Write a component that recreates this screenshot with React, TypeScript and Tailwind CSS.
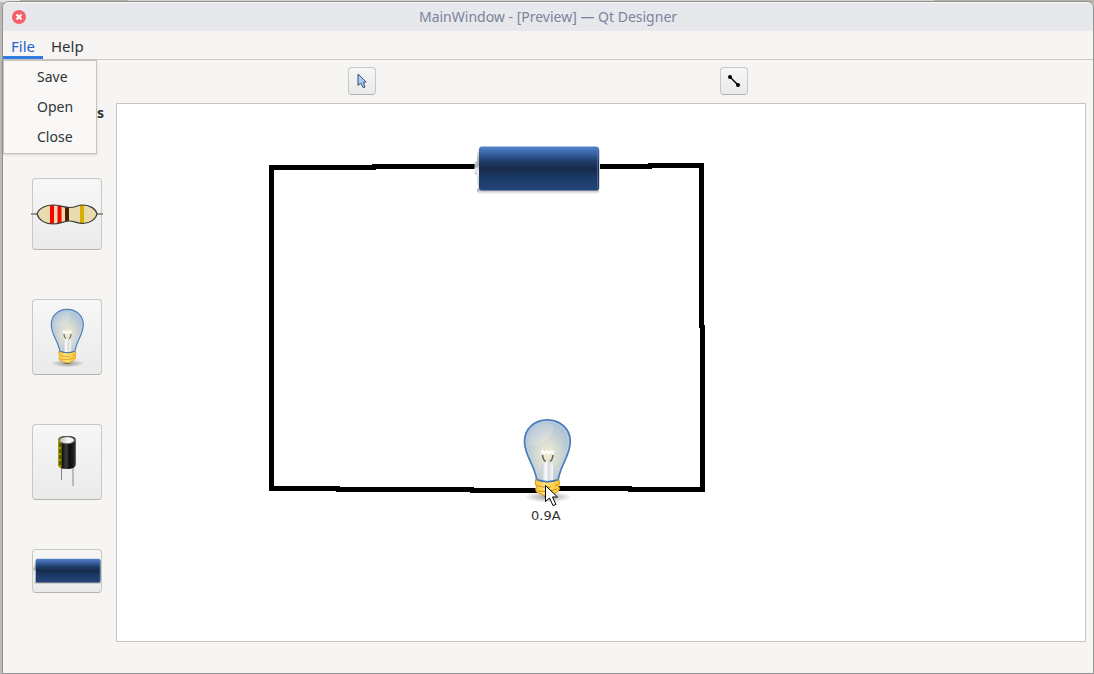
import type { ReactNode, SVGProps } from "react";

function Bulb(props: SVGProps<SVGSVGElement>) {
  return (
    <svg viewBox="0 0 60 90" aria-hidden="true" {...props}>
      <defs>
        <radialGradient id="glass" cx="0.5" cy="0.55" r="0.55">
          <stop offset="0" stopColor="#f3efd6" />
          <stop offset="0.45" stopColor="#d5dad3" />
          <stop offset="1" stopColor="#a9bfd6" />
        </radialGradient>
        <linearGradient id="brass" x1="0" x2="1">
          <stop offset="0" stopColor="#f9c436" />
          <stop offset="0.4" stopColor="#ffe277" />
          <stop offset="1" stopColor="#fbc62f" />
        </linearGradient>
        <linearGradient id="stem" x1="0" x2="1">
          <stop offset="0" stopColor="#c3cdd3" />
          <stop offset="0.35" stopColor="#ffffff" />
          <stop offset="0.6" stopColor="#d5dbde" />
          <stop offset="1" stopColor="#f7f9fa" />
        </linearGradient>
        <radialGradient id="bulbShadow">
          <stop offset="0" stopColor="#000" stopOpacity="0.38" />
          <stop offset="1" stopColor="#000" stopOpacity="0" />
        </radialGradient>
      </defs>
      <ellipse cx="31" cy="82" rx="24" ry="5.5" fill="url(#bulbShadow)" />
      <path d="M25 79 L36 79 L32.5 83 H29 Z" fill="#3c3326" />
      <path
        d="M20 66 C18 50 7.5 41 7.5 26.5 C7.5 14 17.5 4.8 30.3 4.8 S53.3 14 53.3 26.5 C53.3 41 43 50 41 66 Q30.500 70 20 66Z"
        fill="url(#glass)"
        stroke="#4a7ebb"
        strokeWidth="1.700"
      />
      <path
        d="M21.700 64 C20 49 9.500 41 9.500 26.500 C9.500 15 18.600 6.800 30.300 6.800 S51.300 15 51.300 26.500 C51.300 41 41 49 39.300 64"
        fill="none"
        stroke="#c3d6ea"
        strokeOpacity="0.75"
        strokeWidth="1"
      />
      <path d="M11 27 C10 13 24 6 36 9.500 C37 20 28 31 12.500 31Z" fill="#fff" fillOpacity="0.16" />
      <path d="M25 65 V51 Q25 47 28 47 H33 Q36 47 36 51 V65 Q30 67.500 25 65Z" fill="url(#stem)" />
      <path d="M25.500 40 Q26 45 28.500 46.500 M36 40 Q35.500 45 33 46.500" fill="none" stroke="#6e6251" strokeWidth="1.600" />
      <path d="M24.500 38 L25.500 35.500 L27.500 38.500 L29.500 36 L31.500 38.500 L33.500 36 L35.500 38.500 L36.500 35.500" fill="none" stroke="#fff" strokeWidth="1.600" />
      <path
        d="M18.500 64.500 Q30 69 42 64.500 L42.500 69 L41.500 71 L42.500 74 L41 76.500 Q38 78 35 80.500 Q31 83 27 80.500 L19.500 77 L18.500 74 L20 72 L18.300 69Z"
        fill="url(#brass)"
        stroke="#dc961c"
        strokeWidth="1"
      />
      <path d="M20 70.500 Q28 73.500 34 72 M38 71 L41 69.500 M21 76 Q31 78 40 74" fill="none" stroke="#c98a1a" strokeWidth="0.900" />
      <path d="M20 64.800 Q30.500 68.500 41 64.800" fill="none" stroke="#3f75b5" strokeWidth="1.500" />
    </svg>
  );
}

function Battery(props: SVGProps<SVGSVGElement>) {
  return (
    <svg viewBox="0 0 126 50" aria-hidden="true" {...props}>
      <defs>
        <linearGradient id="cell" x1="0" y1="0" x2="0" y2="1">
          <stop offset="0" stopColor="#5685cc" />
          <stop offset="0.12" stopColor="#4069ad" />
          <stop offset="0.32" stopColor="#20406f" />
          <stop offset="0.5" stopColor="#162a4a" />
          <stop offset="0.72" stopColor="#1b3a68" />
          <stop offset="1" stopColor="#24457a" />
        </linearGradient>
        <linearGradient id="metal" x1="0" y1="0" x2="0" y2="1">
          <stop offset="0" stopColor="#d9d9d9" />
          <stop offset="0.4" stopColor="#a9a9a9" />
          <stop offset="0.55" stopColor="#f1f1f1" />
          <stop offset="1" stopColor="#cccccc" />
        </linearGradient>
        <linearGradient id="cellShadow" x1="0" y1="0" x2="0" y2="1">
          <stop offset="0" stopColor="#000" stopOpacity="0.45" />
          <stop offset="1" stopColor="#000" stopOpacity="0" />
        </linearGradient>
      </defs>
      <rect x="3" y="43" width="122" height="6" rx="2.500" fill="url(#cellShadow)" />
      <rect x="0.500" y="16" width="6" height="14" rx="2" fill="url(#metal)" />
      <path d="M7 3 Q3 6 3 13 V35 Q3 42 7 45Z" fill="url(#metal)" />
      <rect x="119" y="3" width="7" height="42" rx="3" fill="#d7d7d7" />
      <rect x="5" y="1.500" width="120" height="44" rx="3" fill="url(#cell)" />
      <path d="M123.500 4 V43" stroke="#5b7db2" strokeOpacity="0.6" />
    </svg>
  );
}

function Resistor() {
  const body =
    "M1 0 C3 -6 10 -9 17 -9 C24 -9 28 -6.500 34 -6.500 C40 -6.500 41 -9 47 -9 C54 -9 60 -5 61 0 C60 5 54 9.500 47 9.500 C41 9.500 38 7 33 7 C28 7 24 10 17 10 C9 10 3 6 1 0Z";
  return (
    <svg className="h-6 w-[72px] shrink-0" viewBox="0 0 72 24" aria-hidden="true">
      <defs>
        <clipPath id="resistorBody">
          <path d={body} />
        </clipPath>
      </defs>
      <path d="M0 12 H72" stroke="#777" strokeWidth="1.500" />
      <g transform="translate(5 12)">
        <path d={body} fill="#e8dbae" />
        <g clipPath="url(#resistorBody)">
          <path d="M16 -12 V12 M23.500 -12 V12" stroke="#f00" strokeWidth="4" />
          <path d="M31 -12 V12" stroke="#4c1f03" strokeWidth="4" />
          <path d="M46 -12 V12" stroke="#d8ae00" strokeWidth="4" />
        </g>
        <path d={body} fill="none" stroke="#3c3c38" strokeWidth="1.200" />
      </g>
    </svg>
  );
}

function Capacitor() {
  return (
    <svg className="h-[54px] w-6" viewBox="0 0 24 54" aria-hidden="true">
      <defs>
        <linearGradient id="can" x1="0" x2="1">
          <stop offset="0.2" stopColor="#080808" />
          <stop offset="0.45" stopColor="#3d3d3d" />
          <stop offset="0.65" stopColor="#0c0c0c" />
          <stop offset="0.9" stopColor="#222" />
          <stop offset="1" stopColor="#777" />
        </linearGradient>
        <linearGradient id="canTop" x1="0" x2="1">
          <stop offset="0" stopColor="#bbb" />
          <stop offset="0.6" stopColor="#fafafa" />
          <stop offset="1" stopColor="#ddd" />
        </linearGradient>
      </defs>
      <path d="M6.500 31 V45" stroke="#858585" />
      <path d="M18 32 V51" stroke="#aaa" strokeWidth="1.500" />
      <path d="M3 5 Q3 1 12 1 T21 5 V29 Q21 34 12 34 T3 29Z" fill="url(#can)" />
      <path d="M3 5 Q3 3 6.500 2 V33 Q3 32 3 29Z" fill="#a5a000" />
      <path d="M5 8 V12 M5 14 V18 M5 20 V24 M5 26 V30" stroke="#5c5900" strokeWidth="2" />
      <ellipse cx="12" cy="5.200" rx="7.500" ry="3.500" fill="url(#canTop)" stroke="#555" strokeWidth="0.700" />
    </svg>
  );
}

const buttonFace =
  "flex items-center justify-center rounded border border-[#cbc7c2] border-b-[#b8b2ac] bg-linear-to-b from-[#f8f7f7] to-[#ebeaea]";

function PartButton({ label, size, children }: { label: string; size: string; children: ReactNode }) {
  return (
    <button aria-label={label} className={`${buttonFace} w-[70px] ${size}`}>
      {children}
    </button>
  );
}

const menuItems = ["Save", "Open", "Close"];

const wires = [
  [269, 165, 107, 5],
  [372, 164, 104, 5],
  [598, 164, 54, 5],
  [648, 163, 56, 5],
  [699, 163, 5, 165],
  [700, 325, 5, 167],
  [628, 487, 77, 5],
  [555, 486, 77, 5],
  [470, 488, 70, 5],
  [336, 487, 138, 5],
  [269, 486, 71, 5],
  [269, 165, 5, 326],
];

function Circuit() {
  return (
    <svg className="h-[430px] w-[600px]" viewBox="117 104 600 430" role="img" aria-label="Circuit with a battery and a bulb">
      <g shapeRendering="crispEdges">
        {wires.map(([x, y, w, h], i) => (
          <rect key={i} x={x} y={y} width={w} height={h} />
        ))}
      </g>
      <Battery x="474" y="145" width="126" height="50" />
      <Bulb x="517" y="415" width="60" height="90" />
      <text x="531" y="520" fontSize="13" fill="#333" className="font-['DejaVu_Sans',sans-serif]">
        0.9A
      </text>
      <path d="M545.500 485.500 V501.500 L549.500 498 L553 505.500 L556 504.500 L552.500 497 H557.500Z" fill="#fff" stroke="#000" />
    </svg>
  );
}

export default function App() {
  return (
    <div className="flex min-h-screen flex-col bg-[#bcb8b4] font-['Noto_Sans',sans-serif] text-sm text-[#2e3436]">
      <div className="flex h-0.5">
        <div className="w-5 bg-[#e6e5e3]" />
        <div className="w-27 bg-[#b7b2a9]" />
        <div className="grow bg-[#d3d1cd]" />
        <div className="w-40 bg-[#b7b2a9]" />
      </div>
      <div className="mr-px mb-px ml-[3px] flex grow flex-col rounded-t-md bg-[#f6f5f4] outline outline-[#929292]">
        <header className="relative flex h-[29px] items-center justify-center rounded-t-md border-t border-[#f5f6f8] bg-[#e6e8ec] text-[#7c839b]">
          <button
            aria-label="Close window"
            className="absolute left-[9px] flex size-3.5 items-center justify-center rounded-full bg-[#f5606a]"
          >
            <svg className="size-2" viewBox="0 0 8 8" aria-hidden="true">
              <path d="M1.500 1.500 L6.500 6.500 M6.500 1.500 L1.500 6.500" stroke="#fff" strokeWidth="2" />
            </svg>
          </button>
          <h1>MainWindow - [Preview] — Qt Designer</h1>
        </header>

        <nav className="flex h-[29px] border-b border-[#cbcac8] text-[15px]">
          <div className="relative flex">
            <button aria-haspopup="menu" aria-expanded="true" className="border-b-3 border-[#2f7bde] px-2 pt-1 leading-5 text-[#2264c9]">
              File
            </button>
            <div
              role="menu"
              className="absolute top-full left-0 z-10 mt-px flex w-[94px] flex-col border border-[#c6c3be] bg-[#f9f8f7] py-px text-sm shadow"
            >
              {menuItems.map((item) => (
                <button key={item} role="menuitem" className="h-[30px] pl-[33px] text-left">
                  {item}
                </button>
              ))}
            </div>
          </div>
          <button className="border-b-3 border-transparent px-2 pt-1 leading-5">Help</button>
        </nav>

        <div className="flex justify-evenly pt-[7px] pb-2">
          <button aria-label="Select" className={`${buttonFace} size-7`}>
            <svg className="h-4 w-3" viewBox="0 0 12 16" aria-hidden="true">
              <path d="M2 1 V12.500 L4.700 10.200 L6.700 14 Q8 15.500 9 14 L7.300 9.300 L10.200 9Z" fill="#a8cdf5" stroke="#39506e" />
            </svg>
          </button>
          <button aria-label="Draw wire" className={`${buttonFace} size-7`}>
            <svg className="size-4" viewBox="0 0 16 16" aria-hidden="true">
              <path d="M4 4 L12 12" stroke="#000" strokeWidth="1.500" />
              <circle cx="4" cy="4" r="2" />
              <circle cx="12" cy="12" r="2" />
            </svg>
          </button>
        </div>

        <main className="flex grow pr-[7px] pb-[31px]">
          <aside className="flex w-[113px] shrink-0 flex-col items-end gap-[49px] pr-3.5">
            <h2 className="-mr-0.5 h-[26px] leading-5 font-bold">Components</h2>
            <PartButton label="Resistor" size="h-[72px]">
              <Resistor />
            </PartButton>
            <PartButton label="Bulb" size="h-[76px]">
              <Bulb className="h-[63px] w-[42px]" />
            </PartButton>
            <PartButton label="Capacitor" size="h-[76px]">
              <Capacitor />
            </PartButton>
            <PartButton label="Battery" size="h-[44px]">
              <Battery className="h-[27px] w-[68px] shrink-0" />
            </PartButton>
          </aside>
          <section aria-label="Canvas" className="grow overflow-hidden border border-[#c8c4bf] bg-white">
            <Circuit />
          </section>
        </main>
      </div>
    </div>
  );
}
